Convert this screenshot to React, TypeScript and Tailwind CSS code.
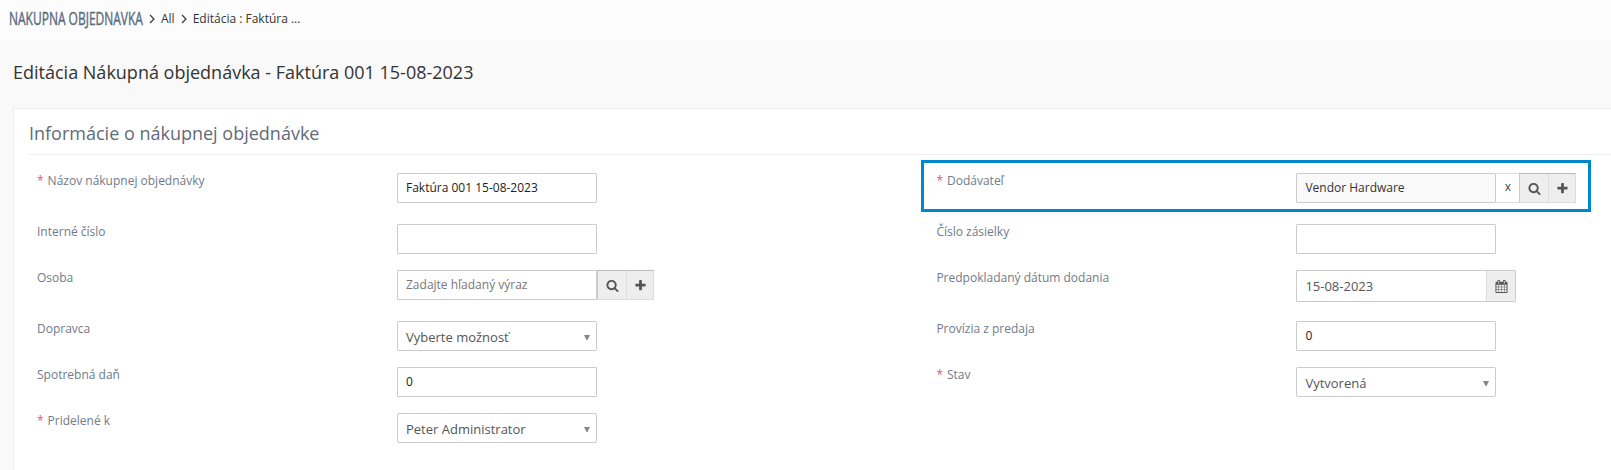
import React from 'react';

const SEARCH = "M1216 832q0-185-131.5-316.5t-316.5-131.5-316.5 131.5-131.5 316.5 131.5 316.5 316.5 131.5 316.5-131.5 131.5-316.5zm512 832q0 52-38 90t-90 38q-54 0-90-38l-343-342q-179 124-399 124-143 0-273.5-55.5t-225-150-150-225-55.5-273.5 55.5-273.5 150-225 225-150 273.5-55.5 273.5 55.5 225 150 150 225 55.5 273.5q0 220-124 399l343 343q37 37 37 90z";
const PLUS = "M1600 736v192q0 40-28 68t-68 28h-416v416q0 40-28 68t-68 28h-192q-40 0-68-28t-28-68v-416h-416q-40 0-68-28t-28-68v-192q0-40 28-68t68-28h416v-416q0-40 28-68t68-28h192q40 0 68 28t28 68v416h416q40 0 68 28t28 68z";
const CALENDAR = "M192 1664h288v-288h-288v288zm352 0h320v-288h-320v288zm-352-352h288v-320h-288v320zm352 0h320v-320h-320v320zm-352-384h288v-288h-288v288zm736 736h320v-288h-320v288zm-384-736h320v-288h-320v288zm768 736h288v-288h-288v288zm-384-352h320v-320h-320v320zm-352-864v-288q0-13-9.500-22.500t-22.500-9.500h-64q-13 0-22.500 9.500t-9.500 22.500v288q0 13 9.500 22.500t22.500 9.500h64q13 0 22.500-9.500t9.500-22.500zm736 864h288v-320h-288v320zm-384-384h320v-288h-320v288zm384 0h288v-288h-288v288zm32-480v-288q0-13-9.500-22.500t-22.500-9.500h-64q-13 0-22.500 9.500t-9.500 22.500v288q0 13 9.500 22.500t22.500 9.500h64q13 0 22.500-9.500t9.500-22.500zm384-64v1280q0 52-38 90t-90 38h-1408q-52 0-90-38t-38-90v-1280q0-52 38-90t90-38h128v-96q0-66 47-113t113-47h64q66 0 113 47t47 113v96h384v-96q0-66 47-113t113-47h64q66 0 113 47t47 113v96h128q52 0 90 38t38 90z";

const Icon = ({ d, className }: { d: string; className: string }) => (
  <svg viewBox="0 0 1792 1792" fill="currentColor" className={className}>
    <path d={d} />
  </svg>
);

const Chevron = () => (
  <svg viewBox="0 0 6 10" className="w-1.5 h-2.5 text-[#333]" fill="none" stroke="currentColor" strokeWidth="1.2">
    <path d="M1 1l4 4-4 4" />
  </svg>
);

const Row = ({ label, required, className, children }: {
  label: string;
  required?: boolean;
  className: string;
  children: React.ReactNode;
}) => (
  <div className={`flex items-start ${className}`}>
    <label className="w-[360px] shrink-0 text-[12px] leading-4 text-[#6f7b8a]">
      {required && <span className="text-[#ff4d5a] mr-1">*</span>}
      {label}
    </label>
    {children}
  </div>
);

const TextInput = ({ value = '', className = 'text-[#222]' }: { value?: string; className?: string }) => (
  <div className={`w-[200px] h-[30px] border border-[#ccc] rounded-[1px] pl-2 text-[12px] leading-[27px] ${className}`}>
    {value}
  </div>
);

const Select = ({ value }: { value: string }) => (
  <div className="w-[200px] h-[30px] border border-[#ccc] rounded-[2px] pl-2 pr-1.5 flex items-center justify-between text-[13px] text-[#555]">
    <span className="leading-[18px] pt-px">{value}</span>
    <svg viewBox="0 0 6 5" className="w-1.5 h-[5px] mt-0.5 text-[#888]" fill="currentColor">
      <path d="M0 0h6L3.500 5h-1z" />
    </svg>
  </div>
);

const LookupButtons = () => (
  <div className="flex h-[30px] border border-[#ddd] border-t-[#bbb] border-l-[#ccc] bg-[#eee] text-[#555]">
    <button className="w-[29px] flex items-center justify-center border-r border-[#ddd]">
      <Icon d={SEARCH} className="w-[13px] h-[13px]" />
    </button>
    <button className="w-[26px] flex items-center justify-center">
      <Icon d={PLUS} className="w-[13px] h-[13px]" />
    </button>
  </div>
);

const App = () => {
  return (
    <div className="w-[1611px] h-[470px] overflow-hidden bg-[#f9f9f9] font-['Open_Sans',sans-serif] flex flex-col">
      <header className="h-10 shrink-0 bg-[#fcfcfc] flex items-center text-[12px] text-[#333] pl-[9px] pb-[3px]">
        <div className="w-[134px] pb-px">
          <span className="inline-block origin-left scale-x-[0.666] whitespace-nowrap text-[18px] leading-6 text-[#596b80] [-webkit-text-stroke:0.4px_#596b80]">NAKUPNA OBJEDNAVKA</span>
        </div>
        <div className="flex items-center pl-1.5">
          <Chevron />
          <span className="ml-1.5 mr-1.5">All</span>
          <Chevron />
          <span className="ml-1.5">Editácia : Faktúra ...</span>
        </div>
      </header>

      <h1 className="h-[68px] shrink-0 pl-[13px] pt-5 text-[18px] leading-6 text-[#333]">
        Editácia Nákupná objednávka - Faktúra 001 15-08-2023
      </h1>

      <section className="ml-[13px] w-[1610px] flex-1 bg-white border border-b-0 border-[#eee]">
        <h2 className="ml-[15px] h-[46px] pt-3 text-[18px] leading-6 text-[#5f6b7a] border-b border-[#eee]">
          Informácie o nákupnej objednávke
        </h2>
        <div className="flex pl-[23px]">
          <div className="w-[884px] shrink-0 pt-[18px]">
            <Row label="Názov nákupnej objednávky" required className="h-[51px]">
              <TextInput value="Faktúra 001 15-08-2023" />
            </Row>
            <Row label="Interné číslo" className="h-[46px]">
              <TextInput />
            </Row>
            <Row label="Osoba" className="h-[51px]">
              <TextInput value="Zadajte hľadaný výraz" className="text-[#777]" />
              <LookupButtons />
            </Row>
            <Row label="Dopravca" className="h-[46px]">
              <Select value="Vyberte možnosť" />
            </Row>
            <Row label="Spotrebná daň" className="h-[46px]">
              <TextInput value="0" />
            </Row>
            <Row label="Pridelené k" required className="h-[46px]">
              <Select value="Peter Administrator" />
            </Row>
          </div>

          <div className="pt-[5px]">
            <div className="w-[670px] h-[52px] border-3 border-[#0088cc] pl-[12.4px] pt-2.5 mb-3">
              <Row label="Dodávateľ" required className="h-[30px]">
                <TextInput value="Vendor Hardware" className="bg-[#f9f9f9] text-[#333]" />
                <div className="w-[23px] h-[30px] border-y border-[#ddd] text-center text-[12px] leading-[26px] text-[#444]">x</div>
                <LookupButtons />
              </Row>
            </div>
            <div className="pl-[15.4px]">
              <Row label="Číslo zásielky" className="h-[46px]">
                <TextInput />
              </Row>
              <Row label="Predpokladaný dátum dodania" className="h-[51px]">
                <div className="w-[220px] h-8 flex border border-[#ccc] rounded-[1px]">
                  <span className="flex-1 pl-2 text-[13px] leading-[30px] text-[#555]">15-08-2023</span>
                  <span className="w-[29px] flex items-center justify-center bg-[#eee] border-l border-[#ddd] text-[#555]">
                    <Icon d={CALENDAR} className="w-[13px] h-[13px]" />
                  </span>
                </div>
              </Row>
              <Row label="Provízia z predaja" className="h-[46px]">
                <TextInput value="0" />
              </Row>
              <Row label="Stav" required className="h-[46px]">
                <Select value="Vytvorená" />
              </Row>
            </div>
          </div>
        </div>
      </section>
    </div>
  );
};

export default App;
